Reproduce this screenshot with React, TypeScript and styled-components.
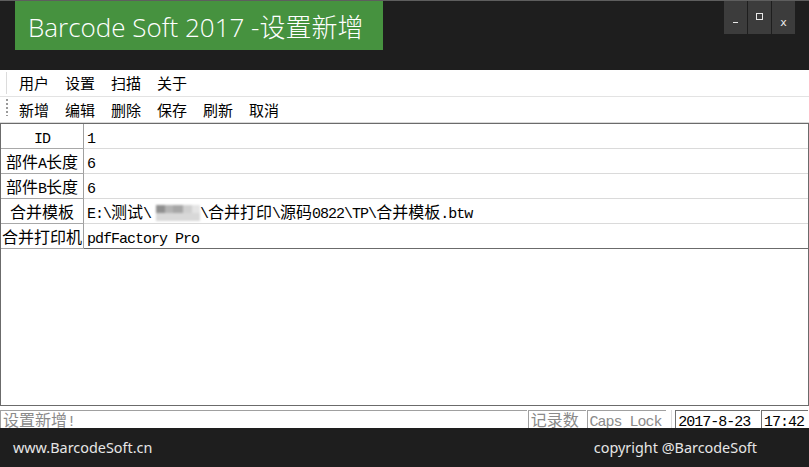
import React from "react";
import styled, { createGlobalStyle } from "styled-components";

const GlobalStyle = createGlobalStyle`
  html, body {
    margin: 0;
    padding: 0;
    background: #ffffff;
  }
  body {
    width: 809px;
    height: 467px;
    overflow: hidden;
    font-family: "Noto Sans CJK SC", sans-serif;
  }
`;

const CJK_RUN = /([\u3000-\u9fff\uff00-\uffef]+)/;

// SimSun-like look: latin half width (8px), han full width (16px)
const Mixed: React.FC<{ text: string }> = ({ text }) => (
  <>
    {text.split(CJK_RUN).map((part, i) =>
      i % 2 === 1 ? <Han key={i}>{part}</Han> : <Latin key={i}>{part}</Latin>
    )}
  </>
);

const menus = ["用户", "设置", "扫描", "关于"];
const tools = ["新增", "编辑", "删除", "保存", "刷新", "取消"];

const App: React.FC = () => {
  return (
    <Window>
      <GlobalStyle />
      <Header>
        <TitleBox>Barcode Soft 2017 -设置新增</TitleBox>
        <WinButtons>
          <WinButton>
            <MinGlyph />
          </WinButton>
          <WinButton>
            <MaxGlyph />
          </WinButton>
          <WinButton>
            <CloseGlyph>x</CloseGlyph>
          </WinButton>
        </WinButtons>
      </Header>

      <MenuBar>
        <MenuGrip />
        <Items>
          {menus.map((m) => (
            <Item key={m}>{m}</Item>
          ))}
        </Items>
      </MenuBar>

      <ToolBar>
        <ToolGrip />
        <Items>
          {tools.map((t) => (
            <Item key={t}>{t}</Item>
          ))}
        </Items>
      </ToolBar>

      <Frame>
        <Grid>
          <Row>
            <Label>
              <Mixed text="ID" />
            </Label>
            <Value>
              <Mixed text="1" />
            </Value>
          </Row>
          <Row>
            <Label>
              <Mixed text="部件A长度" />
            </Label>
            <Value>
              <Mixed text="6" />
            </Value>
          </Row>
          <Row>
            <Label>
              <Mixed text="部件B长度" />
            </Label>
            <Value>
              <Mixed text="6" />
            </Value>
          </Row>
          <Row>
            <Label>
              <Mixed text="合并模板" />
            </Label>
            <Value>
              <Mixed text="E:\测试\" />
              <Mosaic />
              <Mixed text="\合并打印\源码0822\TP\合并模板.btw" />
            </Value>
          </Row>
          <Row $last>
            <Label>
              <Mixed text="合并打印机" />
            </Label>
            <Value>
              <Mixed text="pdfFactory Pro" />
            </Value>
          </Row>
        </Grid>
      </Frame>

      <StatusBar>
        <Panel $width={528} $muted>
          <Mixed text="设置新增!" />
        </Panel>
        <Panel $width={58} $muted>
          <Mixed text="记录数" />
        </Panel>
        <Panel $width={80} $muted>
          <Mixed text="Caps Lock" />
        </Panel>
        <StatusSep />
        <Panel $width={85}>
          <Mixed text="2017-8-23" />
        </Panel>
        <Panel $width={47}>
          <Mixed text="17:42" />
        </Panel>
      </StatusBar>

      <Footer>
        <span>www.BarcodeSoft.cn</span>
        <span>copyright @BarcodeSoft</span>
      </Footer>
    </Window>
  );
};

export default App;

const Window = styled.div`
  display: flex;
  flex-direction: column;
  width: 809px;
  height: 467px;
  background: #ffffff;
`;

const Header = styled.div`
  display: flex;
  align-items: flex-start;
  height: 69px;
  padding-left: 15px;
  background: #1e1e1e;
  border-top: 1px solid #5e5e5e;
`;

const TitleBox = styled.div`
  width: 355px;
  height: 46px;
  padding: 3px 0 0 13px;
  line-height: 46px;
  background: #46923f;
  color: #ffffff;
  font-family: "Open Sans", "Noto Sans CJK SC", sans-serif;
  font-weight: 300;
  font-size: 26px;
  white-space: nowrap;
`;

const WinButtons = styled.div`
  display: flex;
  gap: 1px;
  margin-left: auto;
  margin-right: 14px;
`;

const WinButton = styled.div`
  display: flex;
  align-items: center;
  justify-content: center;
  width: 23px;
  height: 33px;
  background: #3c3c3c;
`;

const MinGlyph = styled.span`
  display: block;
  width: 5px;
  height: 1px;
  margin-top: 9px;
  background: #e8e8e8;
`;

const MaxGlyph = styled.span`
  display: block;
  width: 5px;
  height: 5px;
  margin-top: -3px;
  border: 1px solid #e8e8e8;
`;

const CloseGlyph = styled.span`
  margin-top: 9px;
  color: #e8e8e8;
  font-family: "DejaVu Sans", sans-serif;
  font-size: 11px;
  line-height: 11px;
`;

const MenuBar = styled.div`
  display: flex;
  align-items: center;
  height: 26px;
  padding-left: 6px;
  border-bottom: 1px solid #e3e3e3;
  background: #ffffff;
`;

const ToolBar = styled(MenuBar)`
  height: 25px;
  border-bottom: 1px solid #d9d9d9;
`;

const MenuGrip = styled.span`
  width: 1px;
  height: 22px;
  margin-right: 12px;
  background: #dcdcdc;
`;

const ToolGrip = styled.span`
  width: 2px;
  height: 17px;
  margin-right: 11px;
  margin-top: -4px;
  background: repeating-linear-gradient(
    to bottom,
    #9a9a9a 0 2px,
    transparent 2px 4px
  );
`;

const Items = styled.div`
  display: flex;
  gap: 16px;
`;

const Item = styled.span`
  color: #000000;
  font-size: 15px;
  line-height: 18px;
`;

const Frame = styled.div`
  flex: none;
  height: 281px;
  border: 1px solid #6b6b6b;
  background: #ffffff;
`;

const Grid = styled.div`
  display: flex;
  flex-direction: column;
`;

const Row = styled.div<{ $last?: boolean }>`
  display: flex;
  height: 24px;
  border-bottom: 1px solid ${(p) => (p.$last ? "#6b6b6b" : "#dadada")};
`;

const Label = styled.div`
  width: 82px;
  border-right: 1px solid #a0a0a0;
  box-shadow: 0 1px 0 #a8a8a8;
  color: #000000;
  text-align: center;
  line-height: 24px;
  white-space: nowrap;
  overflow: hidden;
`;

const Value = styled.div`
  flex: 1;
  padding-left: 3px;
  color: #000000;
  line-height: 24px;
  white-space: pre;
`;

const Han = styled.span`
  font-family: "Noto Sans CJK SC", sans-serif;
  font-size: 16px;
  vertical-align: baseline;
`;

const Latin = styled.span`
  font-family: "Liberation Mono", monospace;
  font-size: 15px;
  letter-spacing: -1px;
  vertical-align: baseline;
`;

const Mosaic = styled.span`
  display: inline-block;
  width: 44px;
  height: 16px;
  margin: 0 0 0 5px;
  vertical-align: -3px;
  background:
    linear-gradient(to right, #8f8f8f 0 9px, #b3b3b3 9px 17px, #a6a6a6 17px 27px, #cfcfcf 27px 36px, #e4e4e4 36px),
    #cccccc;
  background-size: 100% 8px;
  background-repeat: no-repeat;
  box-shadow: inset 0 -8px 0 #d8d8d8;
  filter: blur(1px);
`;

const StatusBar = styled.div`
  display: flex;
  align-items: flex-end;
  height: 22px;
  background: #ffffff;
`;

const Panel = styled.div<{ $width: number; $muted?: boolean }>`
  width: ${(p) => p.$width}px;
  height: 18px;
  padding-left: 2px;
  margin-right: 1px;
  box-sizing: border-box;
  border-top: 1px solid ${(p) => (p.$muted ? "#a0a0a0" : "#707070")};
  border-left: 1px solid ${(p) => (p.$muted ? "#a0a0a0" : "#707070")};
  color: ${(p) => (p.$muted ? "#8a8a8a" : "#000000")};
  line-height: 17px;
  white-space: nowrap;
`;

const StatusSep = styled.span`
  width: 1px;
  height: 18px;
  margin: 0 3px 0 4px;
  background: #dcdcdc;
`;

const Footer = styled.div`
  display: flex;
  align-items: center;
  justify-content: space-between;
  height: 39px;
  padding: 0 52px 0 13px;
  background: #1e1e1e;
  color: #e6e6e6;
  font-family: "Noto Sans", sans-serif;
  font-size: 14.4px;
`;
